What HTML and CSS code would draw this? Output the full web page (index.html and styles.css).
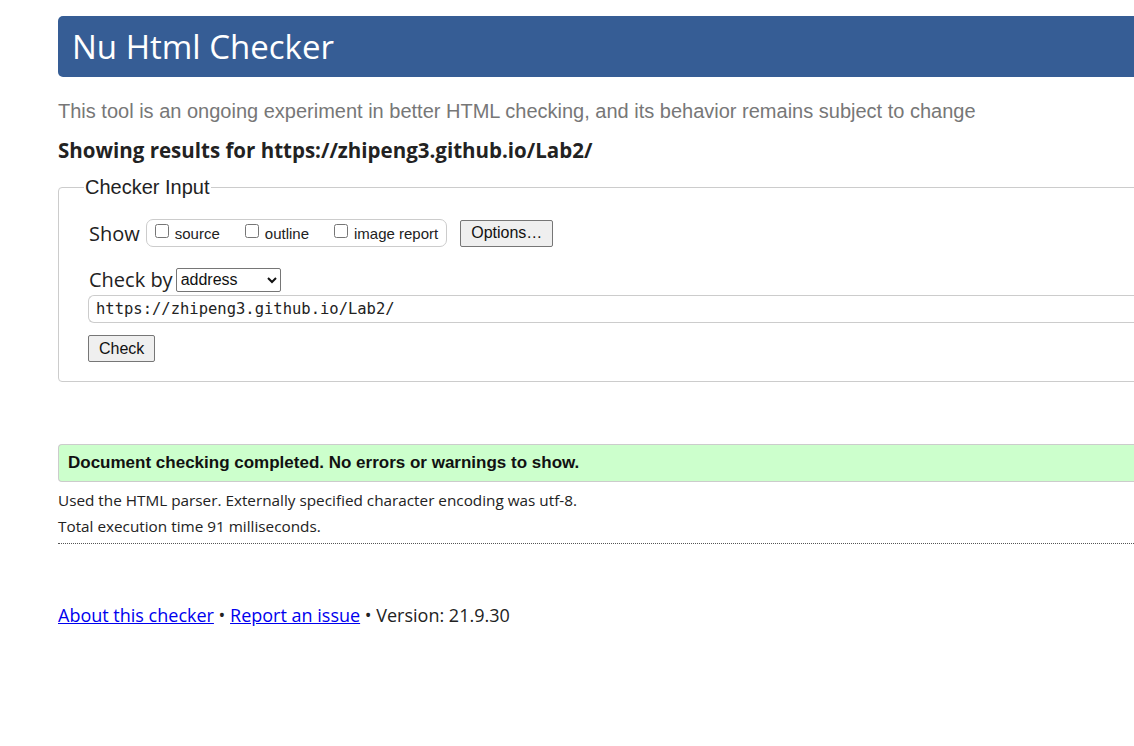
FILE: index.html
```html
<!DOCTYPE html>
<html>
<head>
<meta charset="utf-8">
<title>Nu Html Checker</title>
<link rel="stylesheet" href="styles.css">
</head>
<body>
<div class="page">
  <h1 class="banner">Nu Html Checker</h1>
  <p class="tagline">This tool is an ongoing experiment in better HTML checking, and its behavior remains subject to change</p>
  <h2 class="showing">Showing results for https://zhipeng3.github.io/Lab2/</h2>
  <form class="form">
    <fieldset class="fieldset">
      <legend class="legend">Checker Input</legend>
      <div class="row show-row">
        <span class="label">Show</span>
        <div class="checks">
          <label class="check"><input type="checkbox"> source</label>
          <label class="check"><input type="checkbox"> outline</label>
          <label class="check"><input type="checkbox"> image report</label>
        </div>
        <button type="button" class="btn">Options…</button>
      </div>
      <div class="row by-row">
        <span class="label">Check by</span>
        <select class="select"><option>address</option></select>
      </div>
      <div class="urlbox">https://zhipeng3.github.io/Lab2/</div>
      <button type="button" class="btn check-btn">Check</button>
    </fieldset>
  </form>
  <div class="success">Document checking completed. No errors or warnings to show.</div>
  <p class="details">Used the HTML parser. Externally specified character encoding was utf-8.</p>
  <p class="details">Total execution time 91 milliseconds.</p>
  <hr class="dots">
  <p class="footer"><a href="#">About this checker</a> • <a href="#">Report an issue</a> • Version: 21.9.30</p>
</div>
</body>
</html>
```
FILE: styles.css
```css
html, body {
  margin: 0;
  padding: 0;
  background: #fff;
  overflow: hidden;
}
body {
  width: 1134px;
  height: 746px;
  font-family: "Open Sans", "Noto Sans", sans-serif;
  color: #222;
}
.page {
  margin: 16px 0 0 58px;
  width: 1140px;
}
.banner {
  margin: 0;
  height: 61px;
  box-sizing: border-box;
  background: #365d95;
  color: #fff;
  border-radius: 5px;
  font-weight: 400;
  font-size: 33px;
  line-height: 62px;
  padding-left: 14px;
}
.tagline {
  margin: 22px 0 0;
  font-family: "Liberation Sans", Arial, sans-serif;
  font-size: 20px;
  line-height: 24px;
  color: #777;
}
.showing {
  margin: 13px 0 0;
  font-size: 20.5px;
  line-height: 28px;
  font-weight: 700;
  color: #222;
}
.form { margin: 12px 0 0; }
.fieldset {
  margin: 0;
  border: 1px solid #ccc;
  border-radius: 4px;
  padding: 8px 0 19px 30px;
}
.legend {
  font-family: "Liberation Sans", Arial, sans-serif;
  font-size: 20px;
  color: #222;
  padding: 0 1px;
  margin-left: -5px;
}
.row {
  display: flex;
  align-items: center;
}
.show-row { margin-top: 12px; }
.label {
  font-size: 20px;
  color: #222;
  margin-right: 6px;
}
.checks {
  display: flex;
  align-items: center;
  gap: 25px;
  border: 1px solid #ccc;
  border-radius: 7px;
  height: 28px;
  padding: 0 8px 0 8px;
  box-sizing: border-box;
}
.check {
  font-family: "Liberation Sans", Arial, sans-serif;
  font-size: 15px;
  color: #222;
  display: flex;
  align-items: center;
}
.check input {
  margin: 0 6px 5px 0;
  width: 14px;
  height: 14px;
}
.btn {
  font-family: "Liberation Sans", Arial, sans-serif;
  font-size: 16px;
  color: #111;
  background: #efefef;
  border: 1px solid #767676;
  border-radius: 2px;
  padding: 0 10px;
  height: 27px;
}
.show-row .btn { margin-left: 13px; }
.by-row { margin-top: 19px; }
.select {
  font-family: "Liberation Sans", Arial, sans-serif;
  font-size: 16px;
  height: 24px;
  width: 105px;
  border: 1px solid #767676;
  border-radius: 2px;
  background: #fff;
  color: #111;
  margin-left: -3px;
}
.urlbox {
  margin-top: 2px;
  margin-left: -1px;
  height: 28px;
  box-sizing: border-box;
  border: 1px solid #ccc;
  border-right: none;
  border-radius: 6px 0 0 6px;
  font-family: "DejaVu Sans Mono", "Liberation Mono", monospace;
  font-size: 15.5px;
  line-height: 26px;
  padding-left: 7px;
  color: #222;
}
.check-btn {
  margin-top: 12px;
  margin-left: -1px;
  height: 27px;
  padding: 0 10px;
}
.success {
  margin-top: 62px;
  height: 38px;
  box-sizing: border-box;
  background: #ccffcc;
  border: 1px solid #ccc;
  border-right: none;
  border-radius: 4px 0 0 4px;
  font-family: "Liberation Sans", Arial, sans-serif;
  font-weight: 700;
  font-size: 17px;
  line-height: 36px;
  padding-left: 9px;
  color: #111;
}
.details {
  margin: 0;
  font-size: 15.3px;
  line-height: 26px;
  color: #222;
}
.success + .details { margin-top: 5px; }
.dots {
  margin: 4px 0 0;
  border: none;
  border-top: 1px dotted #555;
  height: 0;
}
.footer {
  margin: 59px 0 0;
  font-size: 18px;
  color: #222;
}
.footer a { color: #0000ee; }
```
